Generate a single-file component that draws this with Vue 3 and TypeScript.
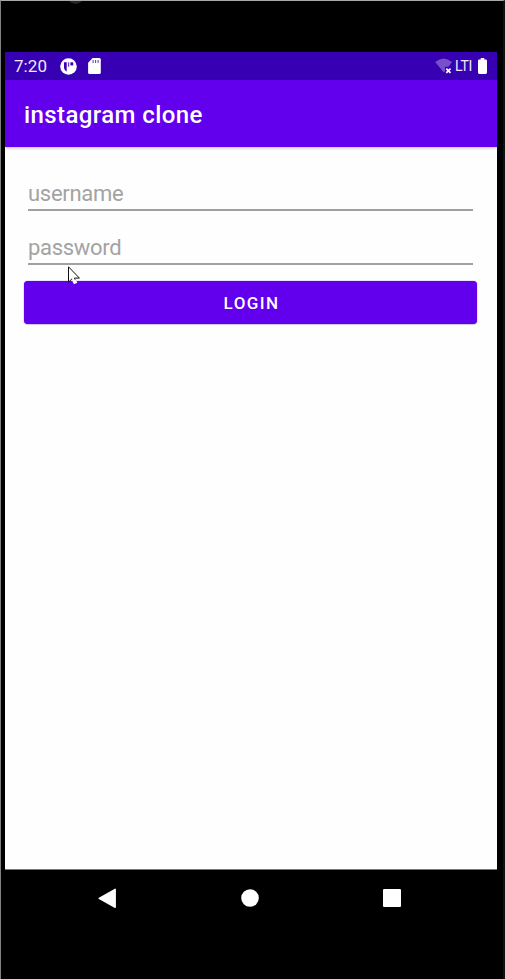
<script setup lang="ts">
import { reactive } from 'vue'

const form = reactive({ username: '', password: '' })
</script>

<template>
  <div class="device">
    <div class="camera"></div>
    <main class="screen">
      <header class="status">
        <span class="time">7:20</span>
        <svg class="notice" width="17" height="17" viewBox="0 0 17 17">
          <circle cx="8.5" cy="8.5" r="8.3" fill="#fff" />
          <path d="M4 4.3h2.7v9.2Q4 12.4 4 9z" fill="#3700b3" />
          <path d="M7.9 4.3h1.3v4.4H7.9z" fill="#3700b3" opacity=".75" />
          <path d="M10.4 4.3h2.8v3.1h-2.8z" fill="#3700b3" />
        </svg>
        <svg class="sd" width="13" height="16" viewBox="0 0 13 16">
          <path d="M4.6 0H11.4Q12.8 0 12.8 1.5V14.4Q12.8 16 11.4 16H1.5Q.1 16 .1 14.4V4.7z" fill="#fff" />
          <path d="M5.1 2v3M7.6 2v3M10.1 2v3" stroke="#3700b3" stroke-width="1" opacity=".8" />
        </svg>
        <span class="spacer"></span>
        <svg class="wifi" width="18" height="17" viewBox="0 0 18 17">
          <path d="M.2 4Q8.5-3.2 17 4l-3.6 4.8H10v4.3l-1.2 1.5z" fill="#7850ca" />
          <path d="M11.3 10.6l4.2 4.2m0-4.2l-4.2 4.2" stroke="#fff" stroke-width="1.7" />
        </svg>
        <span class="network">LTI</span>
        <svg class="battery" width="9" height="16" viewBox="0 0 9 16">
          <path d="M2.7 0h3.6v1.6h1.4Q9 1.6 9 2.8v11.8Q9 16 7.7 16H1.3Q0 16 0 14.6V2.8q0-1.2 1.3-1.2h1.4z" fill="#fff" />
        </svg>
      </header>
      <div class="appbar"><h1>instagram clone</h1></div>
      <form class="login" @submit.prevent>
        <input v-model="form.username" type="text" placeholder="username" />
        <input v-model="form.password" type="password" placeholder="password" />
        <button type="submit">LOGIN</button>
      </form>
    </main>
    <nav class="navigation">
      <svg width="19" height="21" viewBox="0 0 19 21">
        <path d="M17.2 1.3v18L1.2 10.4z" fill="#fff" stroke="#fff" stroke-width="1.4" stroke-linejoin="round" />
      </svg>
      <svg width="18" height="18" viewBox="0 0 18 18"><circle cx="9" cy="9" r="8.8" fill="#fff" /></svg>
      <svg width="18" height="18" viewBox="0 0 18 18"><rect width="18" height="18" rx="1" fill="#fff" /></svg>
    </nav>
    <svg class="pointer" width="13" height="19" viewBox="0 0 13 19">
      <path d="M.5.8v15.3l3.5-3.2 2.2 4.7 2.4-1.1-2.2-4.4h5z" fill="#fff" stroke="#111" stroke-width="1" />
      <path d="M4.1 13.2l2.1 4.4 2.4-1.1-1.3-2.7" fill="#fff" stroke="#fff" stroke-width="1.1" />
    </svg>
  </div>
</template>

<style>
body {
  margin: 0;
  background: #000;
}
</style>

<style scoped>
.device {
  position: relative;
  box-sizing: border-box;
  width: 505px;
  height: 979px;
  padding: 51px 6px 0 4px;
  border-top: 1px solid #a8a8a8;
  border-left: 1px solid #808080;
  border-right: 2px solid #111;
  overflow: hidden;
  background: #000;
  font-family: Roboto, sans-serif;
}
.camera {
  position: absolute;
  top: -14px;
  left: 66px;
  width: 17px;
  height: 17px;
  border-radius: 50%;
  background: #252525;
}
.screen {
  box-sizing: border-box;
  width: 492px;
  height: 818px;
  background: #fefefe;
  border-bottom: 1px solid #777;
}
.status {
  box-sizing: border-box;
  display: flex;
  align-items: center;
  height: 28px;
  padding: 0 10px 0 9px;
  background: #3700b3;
  color: #fff;
}
.time {
  width: 46px;
  font-size: 17px;
  line-height: 28px;
  letter-spacing: 0.05px;
  color: #eee9fa;
}
.sd {
  margin-left: 11px;
}
.spacer {
  flex: 1;
}
.network {
  margin-left: 2px;
  width: 18px;
  font-size: 14px;
  line-height: 28px;
  letter-spacing: -0.2px;
  color: #eee9fa;
}
.battery {
  margin-left: 5px;
}
.appbar {
  position: relative;
  display: flex;
  align-items: center;
  height: 67px;
  padding-left: 19px;
  background: #6200ee;
  box-shadow: 0 1px 3px #0004;
}
h1 {
  margin: 2px 0 0;
  color: #fff;
  font-size: 24px;
  line-height: 30px;
  font-weight: 500;
  letter-spacing: 0.4px;
}
.login {
  display: flex;
  flex-direction: column;
  padding: 28px 20px 0 19px;
}
input {
  box-sizing: border-box;
  height: 36px;
  margin: 0 4px 18px;
  padding: 3px 0 0;
  border: 0;
  border-bottom: 2px solid #a0a0a0;
  border-radius: 0;
  outline: none;
  background: transparent;
  color: #222;
  font: 22px/31px Roboto, sans-serif;
  letter-spacing: -0.3px;
}
input::placeholder {
  color: #a3a3a3;
  opacity: 1;
}
button {
  height: 43px;
  margin-top: -2px;
  padding: 0 0 0 2px;
  border: 0;
  border-radius: 4px;
  background: #6200ee;
  box-shadow: 0 1px 1px #0002, 0 0 1px #6200ee;
  color: #fff;
  font: 500 17px/20px Roboto, sans-serif;
  letter-spacing: 1.4px;
}
.navigation {
  display: flex;
  align-items: center;
  justify-content: space-between;
  height: 56px;
  padding: 0 96px 0 93px;
}
.pointer {
  position: absolute;
  top: 265px;
  left: 67px;
}
</style>
